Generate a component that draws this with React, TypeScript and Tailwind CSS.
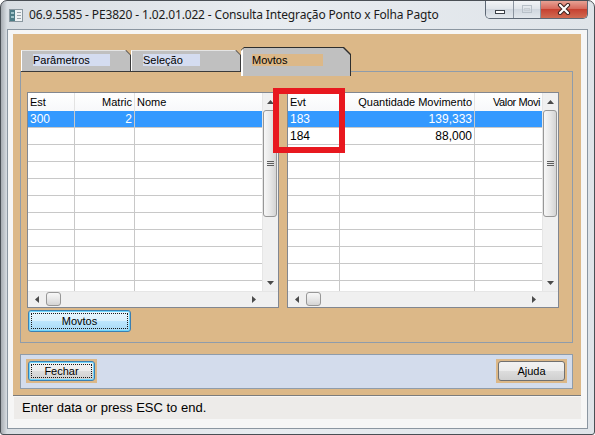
import React from "react"

const sans = "font-['Liberation_Sans',Arial,sans-serif]"
const tan = "bg-[#dcb888]"

type Col = { label: string; cls: string; right?: boolean; last?: boolean; head?: string }

function Tri({ dir }: { dir: "up" | "down" | "left" | "right" }) {
  const vert = dir === "up" || dir === "down"
  const pts = {
    up: "0,4 3.5,0 7,4",
    down: "0,0 7,0 3.5,4",
    left: "4,0 4,7 0,3.5",
    right: "0,0 0,7 4,3.5",
  }[dir]
  return (
    <svg width={vert ? 7 : 4} height={vert ? 4 : 7} viewBox={vert ? "0 0 7 4" : "0 0 4 7"}>
      <polygon points={pts} fill="#4a4a4a" />
    </svg>
  )
}

function Grip() {
  return (
    <div className="flex flex-col gap-[1px]">
      <div className="h-[1px] w-[7px] bg-[#5e5e5e]" />
      <div className="h-[1px] w-[7px] bg-[#5e5e5e]" />
      <div className="h-[1px] w-[7px] bg-[#5e5e5e]" />
    </div>
  )
}

function VScroll() {
  return (
    <div className="w-[16px] shrink-0 flex flex-col bg-[#f0f0f0] border-l border-[#e6e6e6]">
      <div className="h-[17px] flex items-center justify-center">
        <Tri dir="up" />
      </div>
      <div className="h-[107px] mr-[1px] rounded-[3px] border border-[#979797] bg-[linear-gradient(to_right,#f7f7f7,#e8e8e8_50%,#d4d4d4)] flex items-center justify-center">
        <Grip />
      </div>
      <div className="flex-1" />
      <div className="h-[17px] flex items-center justify-center">
        <Tri dir="down" />
      </div>
    </div>
  )
}

function HScroll() {
  return (
    <div className="flex-1 flex bg-[#f0f0f0] border-t border-[#e6e6e6]">
      <div className="w-[17px] flex items-center justify-center">
        <Tri dir="left" />
      </div>
      <div className="w-[15px] ml-[1px] mb-[1px] rounded-[3px] border border-[#979797] bg-[linear-gradient(to_bottom,#f7f7f7,#e8e8e8_50%,#d4d4d4)]" />
      <div className="flex-1" />
      <div className="w-[17px] flex items-center justify-center">
        <Tri dir="right" />
      </div>
    </div>
  )
}

function Grid({ cols, rows, width }: { cols: Col[]; rows: string[][]; width: string }) {
  const body = [...rows]
  while (body.length < 11) body.push(cols.map(() => ""))
  return (
    <div className={`${width} h-[216px] shrink-0 border border-[#828790] bg-white flex flex-col`}>
      <div className="flex flex-1 min-h-0">
        <div className="flex-1 min-w-0 flex flex-col overflow-hidden">
          <div className="flex h-[18px] shrink-0 text-[11px] text-black bg-[linear-gradient(to_bottom,#ffffff,#f7f8fa)]">
            {cols.map((c) => (
              <div
                key={c.label}
                className={`${c.cls} shrink-0 flex items-center px-[2px] whitespace-nowrap ${c.right ? "justify-end" : ""} ${c.last ? "" : "border-r border-[#e3e3e3]"} ${c.head ?? ""}`}
              >
                {c.label}
              </div>
            ))}
          </div>
          <div className="flex-1 overflow-hidden">
            {body.map((r, i) => (
              <div
                key={i}
                className={`flex h-[17px] border-b border-[#c8c8c8] text-[12px] ${i === 0 ? "bg-[#3399ff] text-white" : "text-black"}`}
              >
                {cols.map((c, j) => (
                  <div
                    key={j}
                    className={`${c.cls} shrink-0 flex items-center px-[2px] whitespace-nowrap overflow-hidden ${c.right ? "justify-end" : ""} ${c.last ? "" : "border-r border-[#c8c8c8]"}`}
                  >
                    {r[j]}
                  </div>
                ))}
              </div>
            ))}
          </div>
        </div>
        <VScroll />
      </div>
      <div className="flex h-[16px] shrink-0">
        <HScroll />
        <div className="w-[16px] bg-[#f0f0f0] border-t border-[#e6e6e6]" />
      </div>
    </div>
  )
}

function InactiveTab({ label, labelW }: { label: string; labelW: string }) {
  return (
    <div className="w-[110px] h-[22px] bg-[#3a3a3a] [clip-path:polygon(0_0,calc(100%_-_5px)_0,100%_5px,100%_100%,0_100%)]">
      <div className="h-[21px] mr-[1px] bg-[#c0c0c0] border-t border-l border-t-[#e4e4e4] border-l-white [clip-path:polygon(0_0,calc(100%_-_5px)_0,100%_5px,100%_100%,0_100%)] pl-[11px] pt-[3px]">
        <div className={`${labelW} h-[12px] bg-[#d4dcf0] flex items-center text-[11px] text-black leading-none`}>{label}</div>
      </div>
    </div>
  )
}

function ActiveTab() {
  return (
    <div className="w-[110px] h-[29px] -mb-[4px] bg-[#2e2e2e] [clip-path:polygon(3px_0,calc(100%_-_7px)_0,100%_7px,100%_100%,0_100%,0_3px)]">
      <div className="h-[28px] mt-[1px] mr-[1px] bg-[#c0c0c0] border-l-2 border-white [clip-path:polygon(3px_0,calc(100%_-_7px)_0,100%_7px,100%_100%,0_100%,0_3px)] pl-[9px] pt-[6px]">
        <div className={`w-[71px] h-[12px] ${tan} flex items-center text-[11px] text-black leading-none`}>Movtos</div>
      </div>
    </div>
  )
}

function FocusButton({ label, cls, grad }: { label: string; cls: string; grad: string }) {
  return (
    <div className={`${cls} rounded-[3px] border border-[#3c7fb1] ${grad} shadow-[inset_0_0_0_1px_#72d6fb] p-[2px] flex`}>
      <div className="flex-1 border border-dotted border-[#1a1a1a] flex items-center justify-center text-[11px] text-black leading-none">
        {label}
      </div>
    </div>
  )
}

export default function App() {
  const leftCols: Col[] = [
    { label: "Est", cls: "w-[47px]" },
    { label: "Matric", cls: "w-[60px]", right: true },
    { label: "Nome", cls: "flex-1 min-w-0", last: true },
  ]
  const rightCols: Col[] = [
    { label: "Evt", cls: "w-[52px]" },
    { label: "Quantidade Movimento", cls: "w-[135px]", right: true },
    { label: "Valor Movi", cls: "w-[67px]", last: true, head: "pl-[18px] tracking-[-0.4px]" },
  ]

  return (
    <div
      className={`relative w-[595px] h-[435px] flex flex-col rounded-t-[7px] rounded-b-[3px] border border-[#4a4f55] bg-[linear-gradient(to_right,#a7acb2_0px,#d9dee3_6px,#e8ecf0_45%,#dfe4e9_100%)] overflow-hidden ${sans}`}
    >
      {/* title bar */}
      <div className="h-[28px] shrink-0 flex items-center">
        <svg className="ml-[8px] shrink-0" width="14" height="13" viewBox="0 0 14 13">
          <rect x="0.5" y="0.5" width="13" height="12" fill="#eef2f4" stroke="#8a979f" />
          <rect x="1" y="1" width="5" height="11" fill="#4d7c86" />
          <rect x="2" y="3" width="3" height="2" fill="#9fc2c8" />
          <rect x="2" y="7" width="3" height="2" fill="#9fc2c8" />
          <rect x="8" y="3" width="4" height="1" fill="#9aa4aa" />
          <rect x="8" y="6" width="4" height="1" fill="#9aa4aa" />
          <rect x="8" y="9" width="4" height="1" fill="#9aa4aa" />
        </svg>
        <span className="ml-[6px] text-[12px] text-[#1b1b1b] whitespace-nowrap font-['Noto_Sans',sans-serif] tracking-[-0.15px]">
          06.9.5585 - PE3820 - 1.02.01.022 - Consulta Integração Ponto x Folha Pagto
        </span>
        <div className="ml-auto mr-[6px] self-start -mt-[1px] h-[19px] flex border border-t-0 border-[#5d6875] rounded-b-[5px] overflow-hidden">
          <div className="w-[28px] border-r border-[#8a939e] bg-[linear-gradient(to_bottom,#f4f6f8,#dfe4ea_50%,#cfd6de_50%,#e2e7ec)] flex items-end justify-center pb-[4px]">
            <div className="w-[10px] h-[4px] bg-white border border-[#3c4148]" />
          </div>
          <div className="w-[27px] border-r border-[#8a939e] bg-[linear-gradient(to_bottom,#f4f6f8,#dfe4ea_50%,#cfd6de_50%,#e2e7ec)] flex items-center justify-center">
            <div className="w-[10px] h-[8px] border border-[#b8c0c8] flex items-center justify-center">
              <div className="w-[6px] h-[3px] border border-[#c8ced4]" />
            </div>
          </div>
          <div className="w-[46px] bg-[linear-gradient(to_bottom,#e9a99c,#d7685a_50%,#c63f2f_50%,#d06b52)] flex items-center justify-center">
            <svg width="14" height="12" viewBox="0 0 14 12">
              <path d="M3 2 L11 10 M11 2 L3 10" stroke="#3d2420" strokeWidth="4.2" strokeLinecap="round" />
              <path d="M3 2 L11 10 M11 2 L3 10" stroke="#ffffff" strokeWidth="2.2" strokeLinecap="round" />
            </svg>
          </div>
        </div>
      </div>

      {/* client */}
      <div className="mx-[6px] h-[400px] shrink-0 border border-[#8b96a1] bg-[#f6f6f6] flex flex-col pt-[4px] pl-[5px] pr-[6px]">
        <div className={`h-[362px] shrink-0 ${tan} border-b border-[#7c7c7c] flex flex-col pt-[13px]`}>
          <div className="relative z-10 ml-[8px] h-[25px] flex items-end">
            <InactiveTab label="Parâmetros" labelW="w-[77px]" />
            <InactiveTab label="Seleção" labelW="w-[57px]" />
            <ActiveTab />
          </div>
          <div className="-mt-[1px] ml-[7px] w-[553px] h-[272px] border border-[#8f9caa] flex flex-col pt-[20px] pl-[6px]">
            <div className="flex gap-[8px]">
              <Grid cols={leftCols} rows={[["300", "2", ""]]} width="w-[252px]" />
              <Grid cols={rightCols} rows={[["183", "139,333", ""], ["184", "88,000", ""]]} width="w-[272px]" />
            </div>
            <FocusButton
              label="Movtos"
              cls="mt-[2px] ml-[1px] w-[103px] h-[22px]"
              grad="bg-[linear-gradient(to_bottom,#eaf6fd_0%,#d9f0fc_50%,#bee6fd_50%,#a7d9f5_100%)]"
            />
          </div>
          <div className="mt-[11px] ml-[7px] w-[553px] h-[35px] border border-[#8f9caa] bg-[#d3dcec] flex items-start justify-between pt-[4px] pl-[5px] pr-[5px]">
            <div className={`${tan} p-[2px] w-[71px] h-[24px] flex`}>
              <FocusButton
                label="Fechar"
                cls="flex-1"
                grad="bg-[linear-gradient(to_bottom,#f2f2f2_0%,#ebebeb_50%,#dddddd_50%,#cfcfcf_100%)]"
              />
            </div>
            <div className={`${tan} p-[2px] w-[71px] h-[24px] flex`}>
              <div className="flex-1 rounded-[3px] border border-[#707070] bg-[linear-gradient(to_bottom,#f2f2f2_0%,#ebebeb_50%,#dddddd_50%,#cfcfcf_100%)] flex items-center justify-center text-[11px] text-black leading-none">
                Ajuda
              </div>
            </div>
          </div>
        </div>
        <div className="mt-[1px] ml-[1px] h-[22px] shrink-0 bg-[#edebe9] flex items-center pl-[8px] text-[13px] text-black">
          Enter data or press ESC to end.
        </div>
      </div>

      {/* red annotation box */}
      <div className="absolute left-[272px] top-[87px] w-[72px] h-[65px] border-[6px] border-[#e8181f]" />
    </div>
  )
}
